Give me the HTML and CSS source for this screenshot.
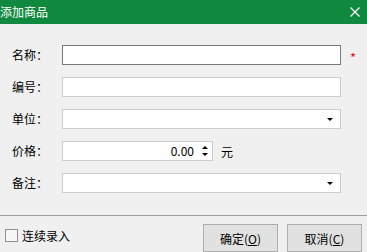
FILE: index.html
```html
<!DOCTYPE html>
<html lang="zh-CN">
<head>
    <meta charset="UTF-8">
    <meta name="viewport" content="width=device-width, initial-scale=1.0">
    <title>添加商品</title>
    <link rel="stylesheet" href="styles.css">
</head>
<body>
    <div class="dialog">
        <div class="titlebar">
            <span class="title">添加商品</span>
            <svg class="close" width="10" height="10" viewBox="0 0 10 10">
                <path d="M0.5 0.5 L9.5 9.5 M9.5 0.5 L0.5 9.5" stroke="#fff" stroke-width="1.3" fill="none"/>
            </svg>
        </div>
        <div class="form">
            <div class="row">
                <label class="label">名称：</label>
                <input class="field focused wide" type="text">
                <span class="required">*</span>
            </div>
            <div class="row">
                <label class="label">编号：</label>
                <input class="field wide" type="text">
            </div>
            <div class="row">
                <label class="label">单位：</label>
                <div class="field wide select"><span class="arrow"></span></div>
            </div>
            <div class="row">
                <label class="label">价格：</label>
                <div class="field price">
                    <span class="value">0.00</span>
                    <span class="spin">
                        <span class="up"></span>
                        <span class="down"></span>
                    </span>
                </div>
                <span class="unit">元</span>
            </div>
            <div class="row">
                <label class="label">备注：</label>
                <div class="field wide select"><span class="arrow"></span></div>
            </div>
        </div>
        <div class="footer">
            <label class="check"><span class="box"></span>连续录入</label>
            <div class="buttons">
                <button class="btn">确定(<u>O</u>)</button>
                <button class="btn">取消(<u>C</u>)</button>
            </div>
        </div>
    </div>
</body>
</html>
```

FILE: styles.css
```css
body {
    margin: 0;
    font-family: "Noto Sans CJK SC", "Liberation Sans", sans-serif;
    font-size: 12px;
    color: #000;
    background-color: #f0f0f0;
    overflow: hidden;
}

.dialog {
    width: 367px;
    height: 252px;
    background: #f0f0f0;
}

.titlebar {
    height: 24px;
    background: #10893e;
    display: flex;
    align-items: center;
    justify-content: space-between;
    padding-right: 7px;
}

.title {
    color: #fff;
    font-size: 12px;
    line-height: 24px;
}

.close {
    display: block;
}

.form {
    display: flex;
    flex-direction: column;
    gap: 12px;
    padding: 21px 0 22px 12px;
    border-bottom: 1px solid #a0a0a0;
}

.row {
    display: flex;
    align-items: center;
    height: 20px;
}

.label {
    width: 50px;
    line-height: 20px;
}

.field {
    box-sizing: border-box;
    height: 20px;
    margin: 0;
    padding: 0 4px;
    background: #fff;
    border: 1px solid #cccccc;
    font: inherit;
    outline: none;
}

.field.focused {
    border-color: #7a7a7a;
}

.wide {
    width: 279px;
}

.required {
    color: #e8101e;
    margin-left: 9px;
    padding-top: 5px;
    font-size: 13px;
    line-height: 20px;
}

.select {
    display: flex;
    align-items: center;
    justify-content: flex-end;
    padding-right: 7px;
}

.arrow {
    width: 0;
    height: 0;
    border-left: 3px solid transparent;
    border-right: 3px solid transparent;
    border-top: 3px solid #000;
}

.price {
    width: 151px;
    display: flex;
    align-items: center;
    justify-content: flex-end;
    padding-right: 4px;
}

.value {
    line-height: 18px;
}

.spin {
    display: flex;
    flex-direction: column;
    gap: 4px;
    margin-left: 8px;
}

.up,
.down {
    width: 0;
    height: 0;
    border-left: 3px solid transparent;
    border-right: 3px solid transparent;
}

.up {
    border-bottom: 3px solid #000;
}

.down {
    border-top: 3px solid #000;
}

.unit {
    margin-left: 8px;
}

.footer {
    display: flex;
    justify-content: space-between;
    padding: 8px 5px 0 5px;
}

.check {
    display: flex;
    align-items: center;
    gap: 4px;
    margin-top: 4px;
    height: 15px;
}

.box {
    box-sizing: border-box;
    width: 13px;
    height: 13px;
    border: 1px solid #8f8f8f;
    background: #f7f7f7;
}

.buttons {
    display: flex;
    gap: 9px;
}

.btn {
    box-sizing: border-box;
    width: 75px;
    height: 28px;
    padding: 0;
    background: #e1e1e1;
    border: 1px solid #adadad;
    font: inherit;
    color: #000;
}
```
